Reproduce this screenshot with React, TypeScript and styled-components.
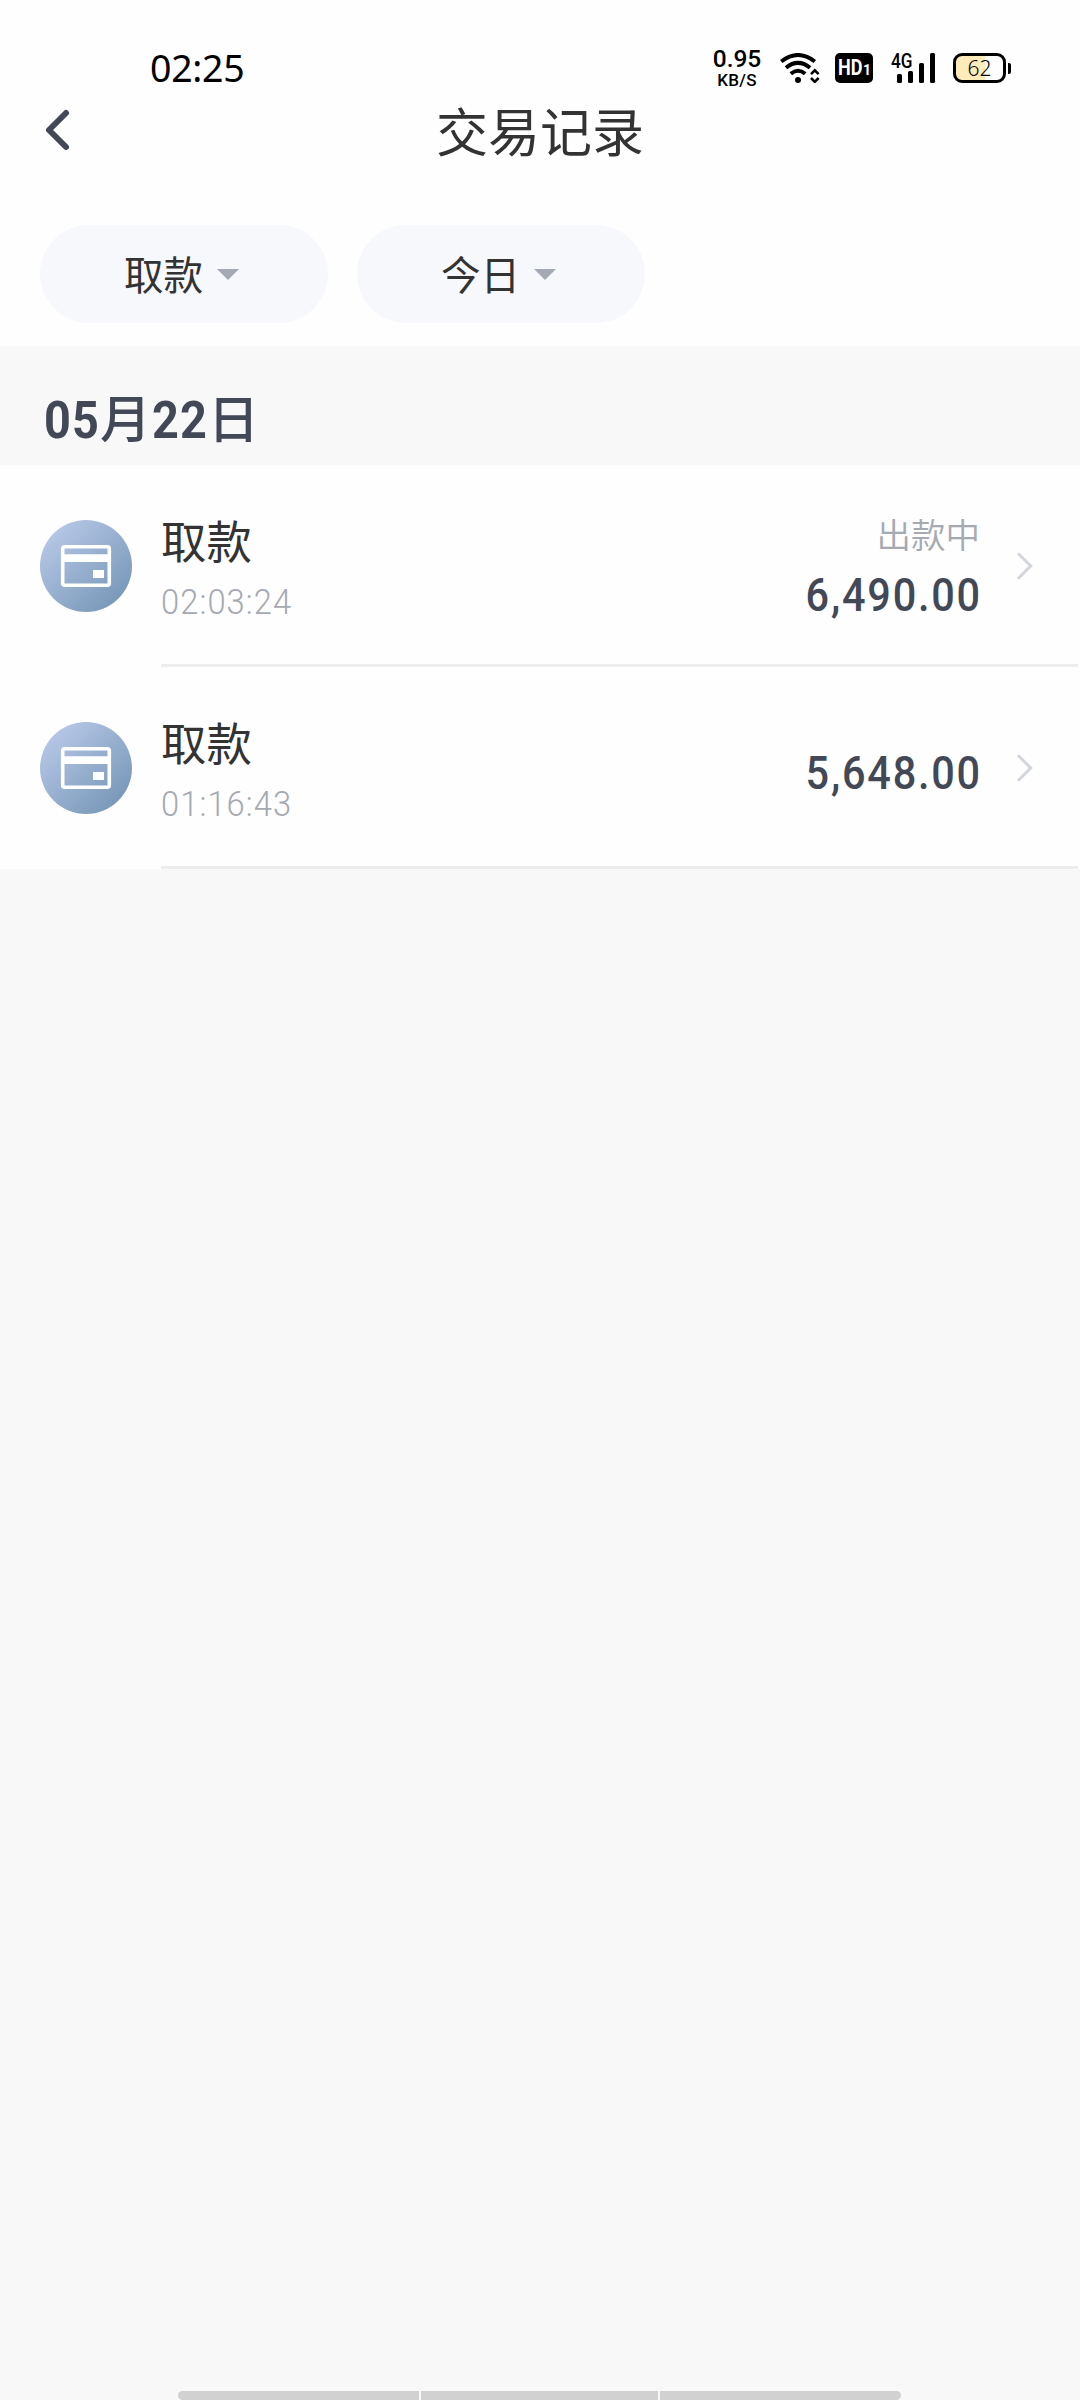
import React from "react";
import styled, { createGlobalStyle } from "styled-components";

const GlobalStyle = createGlobalStyle`
  *, *::before, *::after { box-sizing: border-box; }
  html, body { margin: 0; padding: 0; background: #f8f8f8; }
`;

const cjk = `"Noto Sans CJK SC", sans-serif`;
const din = `Roboto, "Noto Sans CJK SC", sans-serif`;

const Screen = styled.div`
  width: 1080px;
  height: 2400px;
  display: flex;
  flex-direction: column;
  overflow: hidden;
  background: #f8f8f8;
  color: #333333;
  font-family: ${cjk};
  white-space: nowrap;
`;

const Top = styled.header`
  background: #fefefe;
`;

const StatusBar = styled.div`
  height: 100px;
  padding: 36px 69px 0 150px;
  display: flex;
  align-items: center;
  color: #000;
`;

const Clock = styled.time`
  margin-right: auto;
  font: 400 37.5px/64px "Noto Sans", sans-serif;
  letter-spacing: -0.3px;
`;

const Speed = styled.div`
  width: 50px;
  margin-right: 18px;
  display: flex;
  flex-direction: column;
  align-items: center;
  font-family: Roboto, sans-serif;
  font-weight: 500;
`;

const SpeedValue = styled.span`
  font-size: 24.5px;
  line-height: 24px;
`;

const SpeedUnit = styled.span`
  font-size: 17px;
  line-height: 18px;
  letter-spacing: 0.3px;
`;

const WifiIcon = styled.svg`
  width: 40px;
  height: 30px;
  margin-right: 15px;
`;

const HdBadge = styled.div`
  width: 38px;
  height: 30px;
  padding-left: 3px;
  margin-right: 18px;
  border-radius: 5px;
  background: #000;
  color: #fff;
  display: flex;
  align-items: baseline;
  font: 700 22px/30px Roboto, sans-serif;
`;

const HdText = styled.span`
  width: 25px;
  transform: scaleX(0.82);
  transform-origin: left;
`;

const HdIndex = styled.span`
  font-size: 14px;
`;

const Signal = styled.div`
  width: 44px;
  height: 30px;
  margin-right: 18px;
  position: relative;
  display: flex;
  justify-content: flex-end;
  align-items: flex-end;
  gap: 6px;
`;

const Network = styled.span`
  position: absolute;
  left: 0;
  top: -1px;
  font: 500 20px/18px Roboto, sans-serif;
  transform: scaleX(0.86);
  transform-origin: left;
`;

const Bar = styled.i<{ $h: number }>`
  width: 5px;
  height: ${(p) => p.$h}px;
  border-radius: 1.5px;
  background: #000;
`;

const Battery = styled.div`
  display: flex;
  align-items: center;
  gap: 2px;
`;

const Cell = styled.div`
  width: 53px;
  height: 30px;
  border: 3px solid #000;
  border-radius: 9px;
  background: linear-gradient(90deg, #fdebb9 62%, #fefefe 62%);
  text-align: center;
  font: 300 21px/24px "Noto Sans", sans-serif;
`;

const Nub = styled.i`
  width: 3px;
  height: 11px;
  border-radius: 0 2px 2px 0;
  background: #000;
`;

const NavBar = styled.nav`
  height: 60px;
  padding: 0 43px;
  display: grid;
  grid-template-columns: 60px 1fr 60px;
  align-items: center;
`;

const BackIcon = styled.svg`
  width: 28px;
  height: 44px;
`;

const Title = styled.h1`
  margin: 0;
  text-align: center;
  font-size: 52px;
  line-height: 60px;
  font-weight: 400;
`;

const Filters = styled.div`
  padding: 65px 40px 23px;
  display: flex;
  gap: 29px;
`;

const Filter = styled.button`
  width: 288px;
  height: 98px;
  padding: 0 5px 0 0;
  border: 0;
  border-radius: 49px;
  background: #f7f8fc;
  color: #333333;
  display: flex;
  justify-content: center;
  align-items: center;
  gap: 14px;
`;

const FilterLabel = styled.span`
  margin-bottom: 2px;
  font: 400 39.6px/58px ${cjk};
`;

const Caret = styled.i`
  border: solid transparent;
  border-width: 11px 11.5px 0;
  border-top-color: #a5a9b3;
`;

const DateHeader = styled.h2`
  height: 119px;
  margin: 0;
  padding: 25px 44px 0;
  color: #434857;
  display: flex;
  align-items: baseline;
  font: 700 52px/90px ${din};
`;

const DateNumber = styled.span`
  width: 56px;
  letter-spacing: 1.2px;
  transform: scaleX(0.9);
  transform-origin: left;
`;

const DateUnit = styled.span`
  width: 52px;
  font-size: 51px;
  font-weight: 500;
  font-family: ${cjk};
`;

const List = styled.main`
  background: #fefefe;
`;

const Row = styled.article`
  height: 202px;
  padding-left: 40px;
  display: flex;
  gap: 29px;
  align-items: center;
`;

const CardIcon = styled.svg`
  width: 92px;
  height: 92px;
  flex: none;
`;

const Body = styled.div`
  width: 917px;
  height: 202px;
  padding-right: 42px;
  border-bottom: 3px solid #ededed;
  display: flex;
  align-items: center;
`;

const Info = styled.div`
  margin-right: auto;
  padding-top: 6px;
`;

const Kind = styled.div`
  font-size: 45.4px;
  line-height: 60px;
`;

const Time = styled.div`
  margin-top: 9px;
  color: #a5a9b2;
  font: 300 35.5px/48px ${din};
  letter-spacing: 1.2px;
  transform: scaleX(0.92);
  transform-origin: left;
`;

const Money = styled.div`
  margin-right: 36px;
  display: flex;
  flex-direction: column;
  align-items: flex-end;
`;

const State = styled.div`
  margin: 9px 0 12px;
  color: #a5a9b2;
  font-size: 34.5px;
  font-weight: 350;
  line-height: 40px;
`;

const Amount = styled.div<{ $alone: boolean }>`
  padding-top: ${(p) => (p.$alone ? 12 : 0)}px;
  margin-right: -2px;
  color: #434857;
  font: 500 46px/60px ${din};
  letter-spacing: 2px;
  transform: scaleX(0.9);
  transform-origin: right;
`;

const Arrow = styled.svg`
  width: 20px;
  height: 30px;
  margin-top: 2px;
`;

const HomeBar = styled.footer`
  width: 723px;
  height: 9px;
  margin: auto auto 0 178px;
  display: flex;
  gap: 2px;
  border-radius: 5px;
  overflow: hidden;
`;

const Segment = styled.i<{ $w: number }>`
  width: ${(p) => p.$w}px;
  background: #d1d1d1;
`;

const records = [
  { kind: "取款", time: "02:03:24", state: "出款中", amount: "6,490.00" },
  { kind: "取款", time: "01:16:43", state: "", amount: "5,648.00" },
];

function BankCard({ id }: { id: string }) {
  return (
    <CardIcon viewBox="0 0 92 92">
      <defs>
        <linearGradient id={id} x1="0.1" y1="0.1" x2="0.85" y2="0.9">
          <stop offset="0" stopColor="#b8c8e8" />
          <stop offset="1" stopColor="#7898b8" />
        </linearGradient>
      </defs>
      <circle cx="46" cy="46" r="46" fill={`url(#${id})`} />
      <rect x="22.7" y="26.7" width="46.6" height="38.6" rx="2" fill="none" stroke="#fff" strokeWidth="3.6" />
      <path d="M22 34.3h48v7.7H22zM53 50h11v8H53z" fill="#fff" />
    </CardIcon>
  );
}

export default function App() {
  return (
    <Screen>
      <GlobalStyle />
      <Top>
        <StatusBar>
          <Clock>02:25</Clock>
          <Speed>
            <SpeedValue>0.95</SpeedValue>
            <SpeedUnit>KB/S</SpeedUnit>
          </Speed>
          <WifiIcon viewBox="0 0 40 30" fill="none" stroke="#000">
            <path d="M1.2 8.5Q18-4.5 34.8 8.5M6 14.7Q18 5 30 14.7M10.8 20.8Q18 14.8 25.2 20.8" strokeWidth="4" />
            <path d="M31 21.2l3.8-3.8 3.8 3.8M31 25l3.8 3.8 3.8-3.8" strokeWidth="2.6" />
            <circle cx="18" cy="27" r="3" fill="#000" stroke="none" />
          </WifiIcon>
          <HdBadge>
            <HdText>HD</HdText>
            <HdIndex>1</HdIndex>
          </HdBadge>
          <Signal>
            <Network>4G</Network>
            <Bar $h={9} />
            <Bar $h={12} />
            <Bar $h={20} />
            <Bar $h={30} />
          </Signal>
          <Battery>
            <Cell>62</Cell>
            <Nub />
          </Battery>
        </StatusBar>
        <NavBar>
          <BackIcon viewBox="0 0 28 44" fill="none" stroke="#434857" strokeWidth="6" strokeLinecap="round" strokeLinejoin="round">
            <path d="M23 5L6 22l17 17" />
          </BackIcon>
          <Title>交易记录</Title>
        </NavBar>
        <Filters>
          <Filter>
            <FilterLabel>取款</FilterLabel>
            <Caret />
          </Filter>
          <Filter>
            <FilterLabel>今日</FilterLabel>
            <Caret />
          </Filter>
        </Filters>
      </Top>
      <DateHeader>
        <DateNumber>05</DateNumber>
        <DateUnit>月</DateUnit>
        <DateNumber>22</DateNumber>
        <DateUnit>日</DateUnit>
      </DateHeader>
      <List>
        {records.map((r, i) => (
          <Row key={r.time}>
            <BankCard id={`card-${i}`} />
            <Body>
              <Info>
                <Kind>{r.kind}</Kind>
                <Time>{r.time}</Time>
              </Info>
              <Money>
                {r.state && <State>{r.state}</State>}
                <Amount $alone={!r.state}>{r.amount}</Amount>
              </Money>
              <Arrow viewBox="0 0 20 30" fill="none" stroke="#d3d6dc" strokeWidth="3">
                <path d="M2 2.3L14.7 15 2 27.7" />
              </Arrow>
            </Body>
          </Row>
        ))}
      </List>
      <HomeBar>
        <Segment $w={241} />
        <Segment $w={237} />
        <Segment $w={241} />
      </HomeBar>
    </Screen>
  );
}
